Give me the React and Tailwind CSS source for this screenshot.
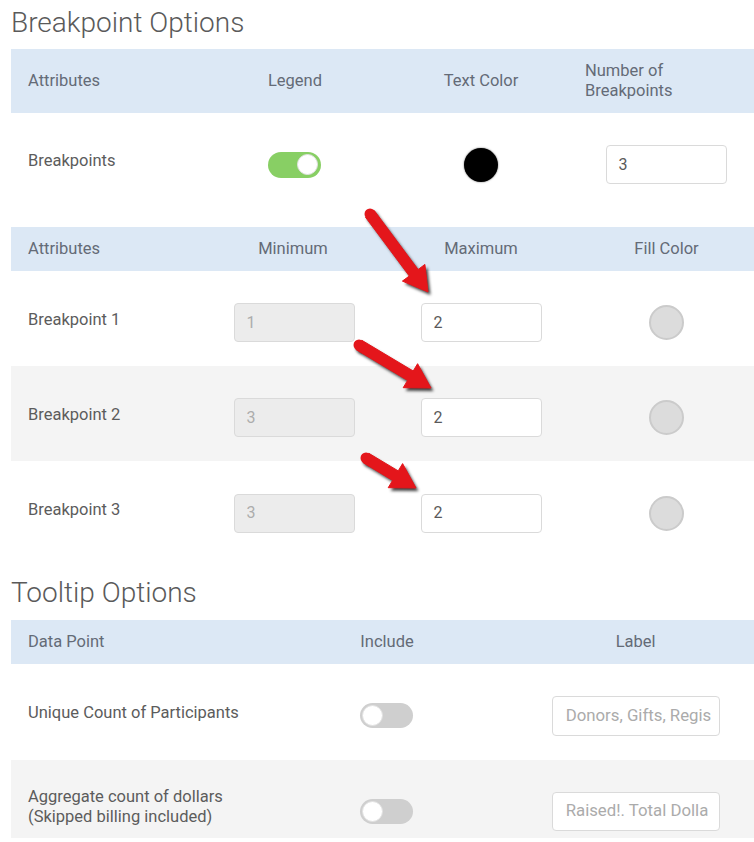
import React from "react";

function Arrow({ x1, y1, x2, y2, sw = 11, hw = 28, hl = 24 }) {
  const dx = x2 - x1;
  const dy = y2 - y1;
  const len = Math.sqrt(dx * dx + dy * dy);
  const ux = dx / len;
  const uy = dy / len;
  const nx = -uy;
  const ny = ux;
  const bx = x2 - ux * hl;
  const by = y2 - uy * hl;
  const pts = [
    [x1 + (nx * sw) / 2, y1 + (ny * sw) / 2],
    [bx + (nx * sw) / 2, by + (ny * sw) / 2],
    [bx + (nx * hw) / 2, by + (ny * hw) / 2],
    [x2, y2],
    [bx - (nx * hw) / 2, by - (ny * hw) / 2],
    [bx - (nx * sw) / 2, by - (ny * sw) / 2],
    [x1 - (nx * sw) / 2, y1 - (ny * sw) / 2],
  ]
    .map((p) => p.map((v) => v.toFixed(1)).join(","))
    .join(" ");
  return (
    <g>
      <g filter="url(#ashadow)" transform="translate(2.5,3)">
        <polygon points={pts} fill="rgba(0,0,0,0.75)" strokeLinejoin="round" />
        <circle cx={x1} cy={y1} r={sw / 2} fill="rgba(0,0,0,0.75)" />
      </g>
      <polygon points={pts} fill="#e4161b" stroke="#e4161b" strokeWidth="1" strokeLinejoin="round" />
      <circle cx={x1} cy={y1} r={sw / 2} fill="#e4161b" />
    </g>
  );
}

function Toggle({ on }) {
  return (
    <div
      className={
        on
          ? "w-[53px] h-[26px] rounded-full bg-[#88cf64] flex items-center justify-end px-[3px]"
          : "w-[53px] h-[25px] rounded-full bg-[#cfcfcf] flex items-center justify-start px-[2px]"
      }
    >
      <div className="w-[21px] h-[21px] rounded-full bg-white border border-[#e2e2e2]" />
    </div>
  );
}

function Input({ value, disabled, w = "w-[121px]" }) {
  return (
    <div
      className={
        (disabled
          ? "bg-[#ececec] text-[#acacac] "
          : "bg-white text-[#5a5a5a] ") +
        w +
        " h-[39px] rounded-[4px] border border-[#dadada] flex items-center pl-[12px] text-[16px]"
      }
    >
      {value}
    </div>
  );
}

function Circle() {
  return <div className="w-[35px] h-[35px] rounded-full bg-[#dcdcdc] border-2 border-[#cbcbcb]" />;
}

export default function App() {
  const hdr = "text-[16.5px] text-[#646b77]";
  const lbl = "text-[16.5px] text-[#5c5c5c]";
  return (
    <div className="relative w-[754px] h-[842px] overflow-hidden bg-white font-['Roboto',sans-serif]">
      <div className="pl-[11px] pt-[5px] pb-[8px] h-[49px]">
        <h1 className="text-[28px] leading-[36px] font-light text-[#5a5a5a]">Breakpoint Options</h1>
      </div>

      <div className="ml-[11px] w-[752px]">
        <div className={"h-[64px] bg-[#dce8f5] grid grid-cols-4 items-center " + hdr}>
          <div className="pl-[17px]">Attributes</div>
          <div className="text-center pl-[4px]">Legend</div>
          <div className="text-center">Text Color</div>
          <div className="pl-[10px] w-[120px] leading-[20px]">Number of Breakpoints</div>
        </div>
        <div className="h-[103px] grid grid-cols-4 items-center">
          <div className={"pl-[17px] mb-[6px] " + lbl}>Breakpoints</div>
          <div className="flex justify-center pl-[2px]">
            <Toggle on />
          </div>
          <div className="flex justify-center">
            <div className="w-[34px] h-[34px] rounded-full bg-black shadow-[0_0_2px_rgba(0,0,0,0.6)]" />
          </div>
          <div className="flex justify-center pr-[6px]">
            <Input value="3" />
          </div>
        </div>

        <div className={"mt-[11px] h-[44px] bg-[#dce8f5] grid grid-cols-4 items-center " + hdr}>
          <div className="pl-[17px]">Attributes</div>
          <div className="text-center">Minimum</div>
          <div className="text-center">Maximum</div>
          <div className="text-center pr-[5px]">Fill Color</div>
        </div>
        {[
          { n: 1, min: "1", h: "h-[95px]", bg: "bg-white" },
          { n: 2, min: "3", h: "h-[95px]", bg: "bg-[#f4f4f4]" },
          { n: 3, min: "3", h: "h-[96px]", bg: "bg-white" },
        ].map((r) => (
          <div key={r.n} className={r.h + " " + r.bg + " pt-[8px] grid grid-cols-4 items-center"}>
            <div className={"pl-[17px] mb-[5px] " + lbl}>Breakpoint {r.n}</div>
            <div className="flex justify-center pl-[2px]">
              <Input value={r.min} disabled />
            </div>
            <div className="flex justify-center">
              <Input value="2" />
            </div>
            <div className="flex justify-center pr-[5px]">
              <Circle />
            </div>
          </div>
        ))}
      </div>

      <div className="pl-[11px] pt-[18px] pb-[9px]">
        <h2 className="text-[28px] leading-[36px] font-light text-[#5a5a5a]">Tooltip Options</h2>
      </div>

      <div className="ml-[11px] w-[752px]">
        <div className={"h-[44px] bg-[#dce8f5] grid grid-cols-3 items-center " + hdr}>
          <div className="pl-[17px]">Data Point</div>
          <div className="text-center">Include</div>
          <div className="text-center pr-[4px]">Label</div>
        </div>
        <div className="h-[96px] pt-[7px] grid grid-cols-3 items-center">
          <div className={"pl-[17px] mb-[5px] " + lbl}>Unique Count of Participants</div>
          <div className="flex justify-center">
            <Toggle />
          </div>
          <div className="flex justify-center pr-[4px]">
            <div className="w-[168px] h-[40px] rounded-[4px] border border-[#dadada] bg-white flex items-center pl-[13px] text-[16.8px] text-[#ababab] overflow-hidden whitespace-nowrap">
              Donors, Gifts, Regis
            </div>
          </div>
        </div>
        <div className="h-[78px] pt-[24px] bg-[#f4f4f4] grid grid-cols-3 items-center">
          <div className={"pl-[17px] mb-[8px] leading-[20px] " + lbl}>
            Aggregate count of dollars
            <br />
            (Skipped billing included)
          </div>
          <div className="flex justify-center">
            <Toggle />
          </div>
          <div className="flex justify-center pr-[4px]">
            <div className="w-[168px] h-[39px] rounded-[4px] border border-[#dadada] bg-white flex items-center pl-[13px] text-[16.8px] text-[#ababab] overflow-hidden whitespace-nowrap">
              Raised!. Total Dolla
            </div>
          </div>
        </div>
      </div>

      <svg className="absolute left-0 top-0 pointer-events-none" width="754" height="842">
        <defs>
          <filter id="ashadow" x="-20%" y="-20%" width="140%" height="140%">
            <feGaussianBlur stdDeviation="1.8" />
          </filter>
        </defs>
        <Arrow x1={370} y1={214} x2={428} y2={292} />
        <Arrow x1={359} y1={345} x2={431} y2={388} />
        <Arrow x1={366} y1={458} x2={416} y2={488} />
      </svg>
    </div>
  );
}
